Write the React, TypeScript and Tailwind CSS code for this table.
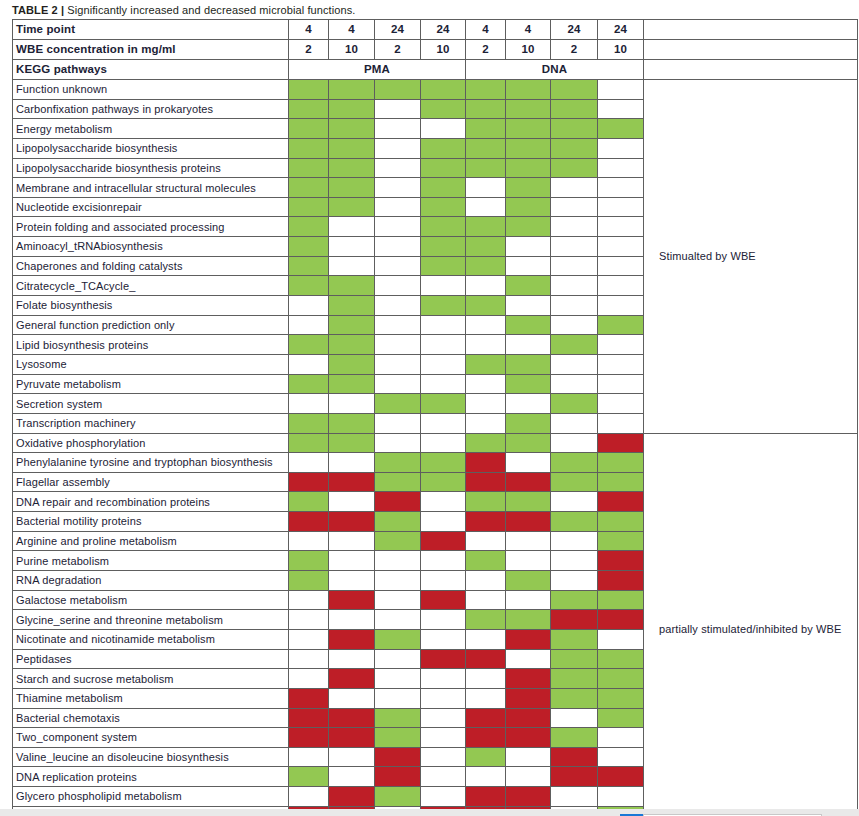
const times = ["4", "4", "24", "24", "4", "4", "24", "24"];
const concs = ["2", "10", "2", "10", "2", "10", "2", "10"];
const widths = ["w-[276px]", "w-[40px]", "w-[46px]", "w-[46px]", "w-[45px]", "w-[40px]", "w-[45px]", "w-[47px]", "w-[46px]", "w-[214px]"];

// G = increased, R = decreased, W = no change
const rows: [string, string][] = [
  ["Function unknown", "GGGGGGGW"],
  ["Carbonfixation pathways in prokaryotes", "GGWGGGGW"],
  ["Energy metabolism", "GGWWGGGG"],
  ["Lipopolysaccharide biosynthesis", "GGWGGGGW"],
  ["Lipopolysaccharide biosynthesis proteins", "GGWGGGGW"],
  ["Membrane and intracellular structural molecules", "GGWGWGWW"],
  ["Nucleotide excisionrepair", "GGWGWGWW"],
  ["Protein folding and associated processing", "GWWGGGWW"],
  ["Aminoacyl_tRNAbiosynthesis", "GWWGGWWW"],
  ["Chaperones and folding catalysts", "GWWGGWWW"],
  ["Citratecycle_TCAcycle_", "GGWWWGWW"],
  ["Folate biosynthesis", "WGWGGWWW"],
  ["General function prediction only", "WGWWWGWG"],
  ["Lipid biosynthesis proteins", "GGWWWWGW"],
  ["Lysosome", "WGWWGGWW"],
  ["Pyruvate metabolism", "GGWWWGWW"],
  ["Secretion system", "WWGGWWGW"],
  ["Transcription machinery", "GGWWWGWW"],
  ["Oxidative phosphorylation", "GGWWGGWR"],
  ["Phenylalanine tyrosine and tryptophan biosynthesis", "WWGGRWGG"],
  ["Flagellar assembly", "RRGGRRGG"],
  ["DNA repair and recombination proteins", "GWRWGGWR"],
  ["Bacterial motility proteins", "RRGWRRGG"],
  ["Arginine and proline metabolism", "WWGRWWWG"],
  ["Purine metabolism", "GWWWGWWR"],
  ["RNA degradation", "GWWWWGWR"],
  ["Galactose metabolism", "WRWRWWGG"],
  ["Glycine_serine and threonine metabolism", "WWWWGGRR"],
  ["Nicotinate and nicotinamide metabolism", "WRGWWRGW"],
  ["Peptidases", "WWWRRWGG"],
  ["Starch and sucrose metabolism", "WRWWWRGG"],
  ["Thiamine metabolism", "RWWWWRGG"],
  ["Bacterial chemotaxis", "RRGWRRWG"],
  ["Two_component system", "RRGWRRGW"],
  ["Valine_leucine an disoleucine biosynthesis", "WWRWGWRW"],
  ["DNA replication proteins", "GWRWWWRR"],
  ["Glycero phospholipid metabolism", "WRGWRRWW"],
  ["", "RRWRRRWG"],
];

const fill: Record<string, string> = {
  G: "bg-[#93c852]",
  R: "bg-[#be1e27]",
  W: "bg-white",
};

const cell = "border border-[#5e5e5e] p-0";

export default function App() {
  return (
    <div className="flex h-[816px] flex-col overflow-hidden bg-white font-['Liberation_Sans',Arial,sans-serif] text-[#1c2236]">
      <div className="h-[809px] overflow-hidden">
        <div className="h-[19px] pl-[12px] text-[11px] leading-[20px] tracking-[0.1px] text-[#231f20]">
          <span className="font-bold">TABLE 2 |</span> Significantly increased and decreased microbial functions.
        </div>
        <table className="ml-[12px] w-[845px] table-fixed border-collapse text-[11px] tracking-[0.12px]">
          <colgroup>
            {widths.map((w, i) => (
              <col key={i} className={w} />
            ))}
          </colgroup>
          <tbody>
            <tr className="h-[20px] text-[11.5px] font-bold">
              <td className={`${cell} pl-[3px]`}>Time point</td>
              {times.map((t, i) => (
                <td key={i} className={`${cell} text-center`}>{t}</td>
              ))}
              <td className={cell}></td>
            </tr>
            <tr className="h-[20px] text-[11.5px] font-bold">
              <td className={`${cell} pl-[3px]`}>WBE concentration in mg/ml</td>
              {concs.map((c, i) => (
                <td key={i} className={`${cell} text-center`}>{c}</td>
              ))}
              <td className={cell}></td>
            </tr>
            <tr className="h-[20px] text-[11.5px] font-bold">
              <td className={`${cell} pl-[3px]`}>KEGG pathways</td>
              <td colSpan={4} className={`${cell} text-center`}>PMA</td>
              <td colSpan={4} className={`${cell} text-center`}>DNA</td>
              <td className={cell}></td>
            </tr>
            {rows.map(([label, pattern], r) => (
              <tr key={r} className="h-[19.65px]">
                <td className={`${cell} truncate pl-[3px] leading-[18px]`}>{label}</td>
                {pattern.split("").map((v, i) => (
                  <td key={i} className={`${cell} ${fill[v]}`}></td>
                ))}
                {r === 0 && (
                  <td rowSpan={18} className={`${cell} pl-[15px] align-middle`}>
                    Stimualted by WBE
                  </td>
                )}
                {r === 18 && (
                  <td rowSpan={20} className={`${cell} pl-[15px] align-middle`}>
                    partially stimulated/inhibited by WBE
                  </td>
                )}
              </tr>
            ))}
          </tbody>
        </table>
      </div>
      <div className="flex h-[7px] items-end bg-[#e9e9e9]">
        <div className="ml-[620px] h-[2px] w-[23px] bg-[#1a78d6]" />
        <div className="h-[2px] w-[179px] border-x border-t border-[#c8c8c8] bg-white" />
      </div>
    </div>
  );
}
